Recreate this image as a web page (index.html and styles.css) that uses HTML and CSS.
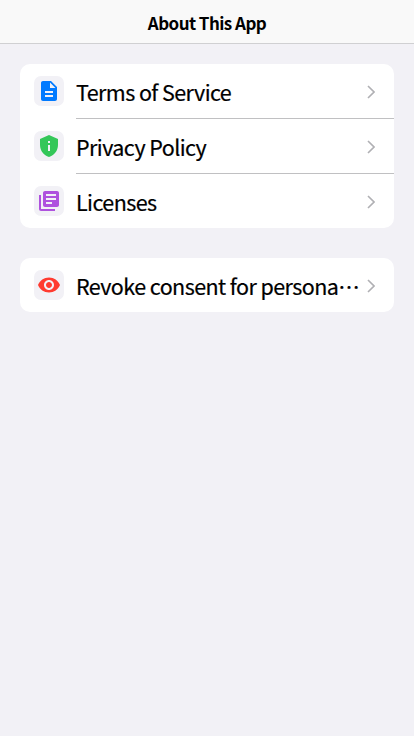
FILE: index.html
```html
<!DOCTYPE html>
<html lang="en">
<head>
<meta charset="utf-8">
<title>About This App</title>
<link rel="stylesheet" href="styles.css">
</head>
<body>
<header class="navbar"><h1 class="title">About This App</h1></header>
<main class="content">
<ul class="group">
<li class="row">
<span class="icon blue"><svg viewBox="0 0 24 24"><path d="M14 2H6c-1.100 0-1.990.9-1.990 2L4 20c0 1.100.89 2 1.990 2H18c1.100 0 2-.9 2-2V8l-6-6zm2 16H8v-2h8v2zm0-4H8v-2h8v2zm-3-5V3.500L18.500 9H13z"/></svg></span>
<span class="body"><span class="label">Terms of Service</span><svg class="chevron" viewBox="0 0 8 14"><path d="M1 1l6 6-6 6"/></svg></span>
</li>
<li class="row">
<span class="icon green"><svg viewBox="0 0 24 24"><path d="M12 1L3 5v6c0 5.550 3.840 10.740 9 12 5.160-1.260 9-6.450 9-12V5l-9-4zm-1 6h2v2h-2V7zm0 4h2v6h-2v-6z"/></svg></span>
<span class="body"><span class="label">Privacy Policy</span><svg class="chevron" viewBox="0 0 8 14"><path d="M1 1l6 6-6 6"/></svg></span>
</li>
<li class="row">
<span class="icon purple"><svg viewBox="0 0 24 24"><path d="M4 6H2v14c0 1.100.9 2 2 2h14v-2H4V6zm16-4H8c-1.100 0-2 .9-2 2v12c0 1.100.9 2 2 2h12c1.100 0 2-.9 2-2V4c0-1.100-.9-2-2-2zm-1 9H9V9h10v2zm-4 4H9v-2h6v2zm4-8H9V5h10v2z"/></svg></span>
<span class="body"><span class="label">Licenses</span><svg class="chevron" viewBox="0 0 8 14"><path d="M1 1l6 6-6 6"/></svg></span>
</li>
</ul>
<ul class="group">
<li class="row">
<span class="icon red"><svg viewBox="0 0 24 24"><path d="M12 4.500C7 4.500 2.730 7.610 1 12c1.730 4.390 6 7.500 11 7.500s9.270-3.110 11-7.500c-1.730-4.390-6-7.500-11-7.500zM12 17c-2.760 0-5-2.240-5-5s2.240-5 5-5 5 2.240 5 5-2.240 5-5 5zm0-8c-1.660 0-3 1.340-3 3s1.340 3 3 3 3-1.340 3-3-1.340-3-3-3z"/></svg></span>
<span class="body"><span class="label" lang="ja">Revoke consent for persona…</span><svg class="chevron" viewBox="0 0 8 14"><path d="M1 1l6 6-6 6"/></svg></span>
</li>
</ul>
</main>
</body>
</html>
```
FILE: styles.css
```css
* { box-sizing: border-box; }
body { margin: 0; min-height: 100vh; background: #f2f1f6; color: #000; font-family: "Noto Sans CJK JP", "Noto Sans", sans-serif; }
.navbar { height: 44px; display: flex; align-items: center; justify-content: center; background: #f9f9f9; border-bottom: 1px solid #d0d0d2; }
.title { margin: 3px 0 0; font-size: 17px; line-height: 26px; font-weight: 700; letter-spacing: -0.55px; }
.content { padding: 20px; display: flex; flex-direction: column; gap: 30px; }
.group { margin: 0; padding: 0; list-style: none; background: #fff; border-radius: 10px; overflow: hidden; }
.row { height: 55px; display: flex; padding-left: 14px; gap: 12px; }
.row:last-child { height: 54px; }
.icon { width: 30px; height: 30px; margin-top: 12px; border-radius: 7px; background: #f2f1f6; display: flex; align-items: center; justify-content: center; flex: none; }
.icon svg { width: 24px; height: 24px; fill: currentColor; }
.blue { color: #007aff; }
.green { color: #34c759; }
.purple { color: #af52de; }
.red { color: #ff3b30; }
.body { flex: 1; min-width: 0; display: flex; align-items: center; justify-content: space-between; padding-right: 19px; border-bottom: 1px solid #c0c0c2; }
.row:last-child .body { border-bottom: 0; }
.label { flex: 1; min-width: 0; font-size: 21.5px; line-height: 32px; letter-spacing: -0.57px; white-space: nowrap; padding-top: 2px; -webkit-text-stroke: 0.2px #000; }
.chevron { width: 8px; height: 14px; margin-top: 1px; fill: none; stroke: #b0b0b4; stroke-width: 1.6; flex: none; }
```
